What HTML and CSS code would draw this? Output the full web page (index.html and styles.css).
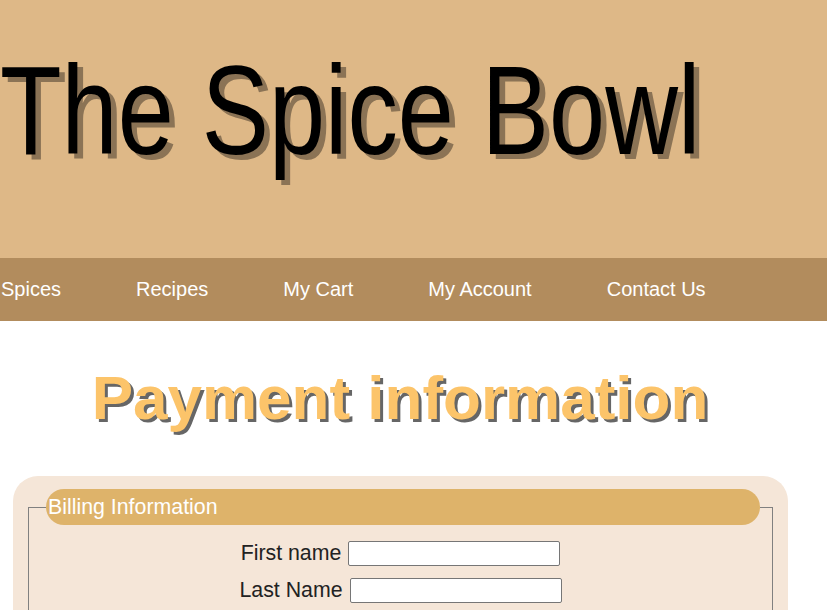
FILE: index.html
```html
<!DOCTYPE html>
<html lang="en">
<head>
<meta charset="utf-8">
<title>The Spice Bowl - Payment</title>
<link rel="stylesheet" href="styles.css">
</head>
<body>
<header class="site-header">
  <h1 class="site-title">The Spice Bowl</h1>
</header>
<nav class="site-nav">
  <a href="#">Spices</a>
  <a href="#">Recipes</a>
  <a href="#">My Cart</a>
  <a href="#">My Account</a>
  <a href="#">Contact Us</a>
</nav>
<main class="main">
  <h2 class="page-title">Payment information</h2>
  <form class="pay-box">
    <fieldset class="billing">
      <legend class="billing-legend">Billing Information</legend>
      <div class="row"><label for="fn">First name</label><input id="fn" type="text"></div>
      <div class="row"><label for="ln">Last Name</label><input id="ln" type="text"></div>
    </fieldset>
  </form>
</main>
</body>
</html>
```
FILE: styles.css
```css
html, body {
  margin: 0;
  padding: 0;
  background: #ffffff;
  font-family: "Liberation Sans", Arial, sans-serif;
}

.site-header {
  background: #deb887;
  height: 258px;
  overflow: hidden;
}

.site-title {
  display: inline-block;
  margin: 0;
  padding-top: 48px;
  font-family: "Liberation Sans", Arial, sans-serif;
  font-weight: normal;
  font-size: 126px;
  line-height: 1;
  color: #000;
  text-shadow: 7px 5px 0 #8b7355;
  white-space: nowrap;
  transform: scaleX(0.8);
  transform-origin: left top;
}

.site-nav {
  background: #b28c5d;
  height: 63px;
  display: flex;
  align-items: center;
  gap: 75px;
  padding-left: 1px;
}

.site-nav a {
  color: #ffffff;
  text-decoration: none;
  font-size: 20px;
}

.main {
  width: 800px;
}

.page-title {
  margin: 41px 0 42px;
  text-align: center;
  font-size: 62px;
  font-weight: bold;
  line-height: 72px;
  color: #fcc46a;
  text-shadow: 3px 3px 0 #666666;
}

.pay-box {
  margin: 0 12px 0 13px;
  background: #f5e6d8;
  border-radius: 25px;
  padding: 13px 13px 20px;
}

.billing {
  margin: 0 2px;
  padding: 0 0 10px 17px;
  border: 1px solid #808080;
}

.billing-legend {
  width: 714px;
  box-sizing: border-box;
  padding: 6px 2px;
  line-height: 24px;
  font-size: 21.33px;
  color: #ffffff;
  background: #deb36a;
  border-radius: 18px;
}

.row {
  display: flex;
  justify-content: center;
  align-items: center;
  gap: 7px;
  height: 37px;
  font-size: 21.33px;
  color: #222222;
  margin-left: -17px;
}

.row:first-of-type {
  margin-top: 10px;
}

.row input {
  width: 212px;
  height: 25px;
  box-sizing: border-box;
  border: 1px solid #767676;
  border-radius: 2px;
  background: #fff;
}
```
